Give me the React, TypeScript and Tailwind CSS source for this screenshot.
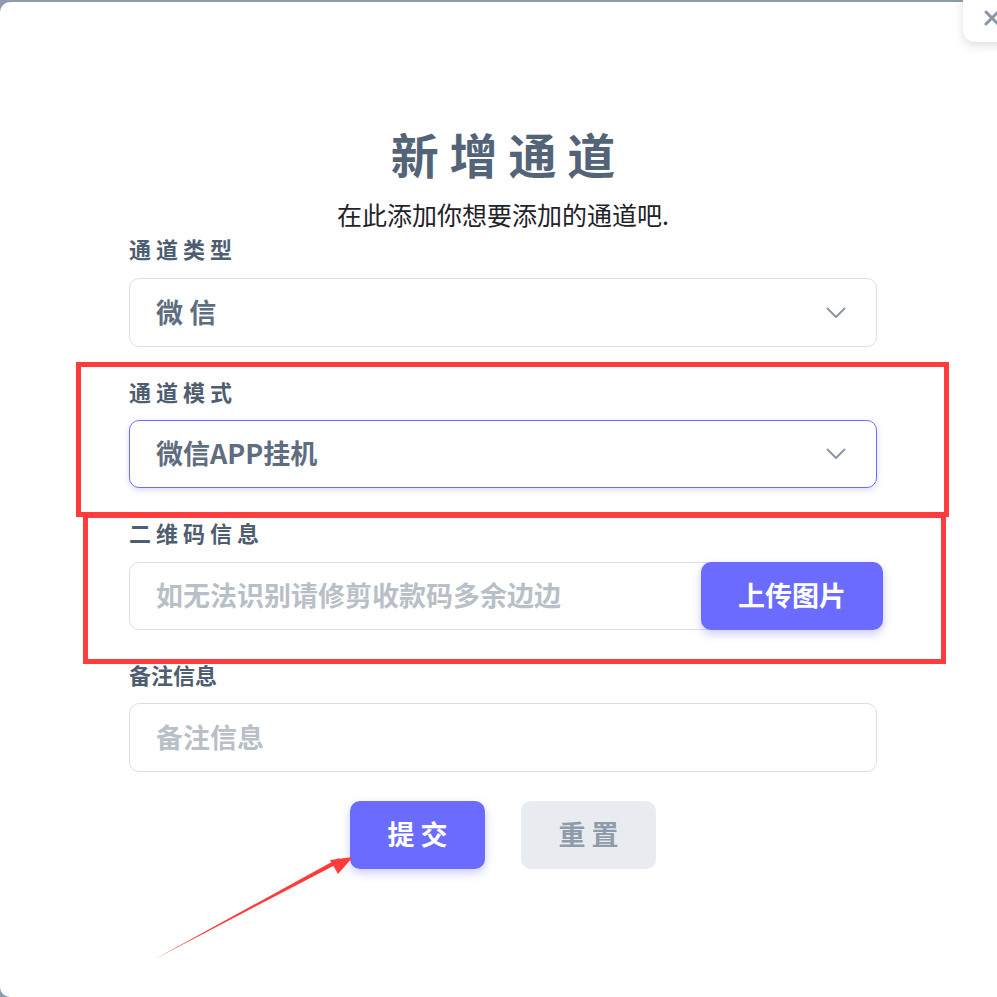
import { X } from "lucide-react";

const cjk = "font-['Noto_Sans_CJK_SC','Noto_Sans',sans-serif]";

function Chevron() {
  return (
    <svg width="20" height="12" viewBox="0 0 20 12" fill="none" className="shrink-0">
      <polyline points="1.5,1.5 10,10 18.5,1.5" stroke="#8a96a6" strokeWidth="2" strokeLinecap="round" strokeLinejoin="round" />
    </svg>
  );
}

function FieldLabel({ children, mt }: { children: React.ReactNode; mt: string }) {
  return (
    <p className={`${mt} h-[28px] text-[22px] leading-[26px] font-bold text-[#4e5d70]`}>{children}</p>
  );
}

export default function App() {
  return (
    <div className={`relative h-[997px] w-[997px] overflow-hidden bg-[#8f9bab] ${cjk}`}>
      {/* modal */}
      <div className="mt-[2px] h-[995px] w-[1006px] rounded-[10px] bg-white pt-[122px]">
        <div className="mx-auto flex w-[748px] flex-col">
          <h1 className="h-[60px] text-center text-[48px] leading-[58px] font-bold text-[#536478]">
            新 增 通 道
          </h1>
          <p className="mt-[16px] h-[30px] text-center text-[25px] leading-[28px] text-[#1f2328]">
            在此添加你想要添加的通道吧.
          </p>

          <FieldLabel mt="mt-[5px]">通 道 类 型</FieldLabel>
          <div className="mt-[15px] flex h-[69px] items-center justify-between rounded-[10px] border border-[#dcdfe4] pr-[30px] pl-[26px]">
            <span className="-mt-[3px] text-[27px] leading-none font-bold text-[#5f6d80]">微 信</span>
            <Chevron />
          </div>

          <FieldLabel mt="mt-[31px]">通 道 模 式</FieldLabel>
          <div className="mt-[14px] flex h-[68px] items-center justify-between rounded-[10px] border border-[#6c6cff] pr-[30px] pl-[26px] shadow-[0_2px_6px_rgba(108,108,255,0.25)]">
            <span className="-mt-[3px] text-[27px] leading-none font-bold text-[#5f6d80]">微信APP挂机</span>
            <Chevron />
          </div>

          <FieldLabel mt="mt-[31px]">二 维 码 信 息</FieldLabel>
          <div className="mt-[15px] flex h-[68px]">
            <div className="flex h-full w-[582px] shrink-0 items-center rounded-l-[10px] border border-[#dcdfe4] pl-[26px]">
              <span className="-mt-[3px] text-[27px] leading-none font-bold text-[#b9bfc7]">如无法识别请修剪收款码多余边边</span>
            </div>
            <button className="relative -ml-[10px] h-full w-[182px] shrink-0 rounded-[10px] bg-[#6b6cff] pb-[3px] text-[27px] leading-none font-bold text-white shadow-[0_4px_10px_rgba(107,108,255,0.35)]">
              上传图片
            </button>
          </div>

          <FieldLabel mt="mt-[31px]">备注信息</FieldLabel>
          <div className="mt-[14px] flex h-[69px] items-center rounded-[10px] border border-[#dcdfe4] pl-[26px]">
            <span className="-mt-[3px] text-[27px] leading-none font-bold text-[#b9bfc7]">备注信息</span>
          </div>

          <div className="mt-[29px] flex justify-center gap-[36px]">
            <button className="h-[68px] w-[135px] rounded-[10px] bg-[#6b6cff] pb-[3px] text-[27px] leading-none font-bold text-white shadow-[0_4px_10px_rgba(107,108,255,0.35)]">
              提 交
            </button>
            <button className="h-[68px] w-[135px] rounded-[10px] bg-[#e8ecf0] pb-[3px] text-[27px] leading-none font-bold text-[#8f9aaa]">
              重 置
            </button>
          </div>
        </div>
      </div>

      {/* close button */}
      <div className="absolute top-[-12px] left-[963px] flex h-[54px] w-[54px] items-center justify-center rounded-[12px] bg-white shadow-[0_4px_10px_rgba(80,90,110,0.18)]">
        <X size={24} strokeWidth={3} color="#8a96a6" className="mt-[6px] ml-[4px]" />
      </div>

      {/* annotations */}
      <div className="absolute top-[362px] left-[76px] h-[155px] w-[873px] border-[5px] border-[#ff3b3b]" />
      <div className="absolute top-[513px] left-[83px] h-[151px] w-[863px] border-[5px] border-[#ff3b3b]" />
      <svg className="absolute top-0 left-0" width="997" height="997" viewBox="0 0 997 997">
        <polygon points="155,959 339,858 341,862" fill="#ff3b3b" />
        <polygon points="353,857 330,860 338,874" fill="#ff3b3b" />
      </svg>
    </div>
  );
}
